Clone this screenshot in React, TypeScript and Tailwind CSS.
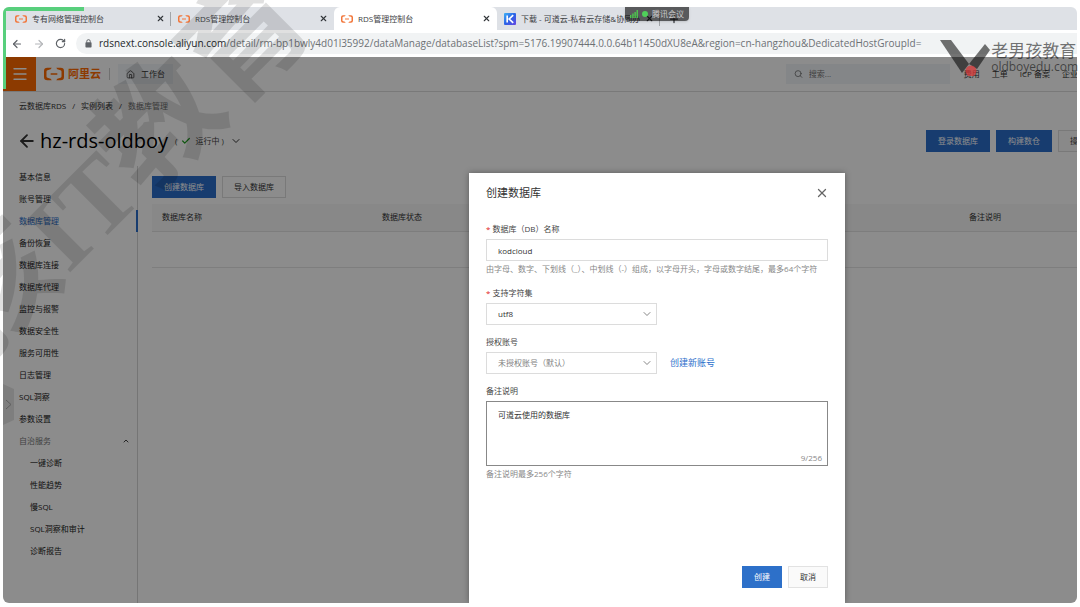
import { ArrowLeft, ArrowRight, Check, ChevronDown, ChevronUp, Home, Menu, Plus, RotateCw, Search, X } from "lucide-react";
import { SiAlibabacloud } from "react-icons/si";

const sideItems = [
  "基本信息",
  "账号管理",
  "数据库管理",
  "备份恢复",
  "数据库连接",
  "数据库代理",
  "监控与报警",
  "数据安全性",
  "服务可用性",
  "日志管理",
  "SQL洞察",
  "参数设置",
];
const subItems = ["一键诊断", "性能趋势", "慢SQL", "SQL洞察和审计", "诊断报告"];

function KodIcon() {
  return (
    <svg viewBox="0 0 12 12" className="size-3 shrink-0" aria-hidden="true">
      <defs>
        <linearGradient id="kod" x1="0" y1="0" x2="1" y2="1">
          <stop offset="0" stopColor="#3fb2f5" />
          <stop offset="0.5" stopColor="#2b62e6" />
          <stop offset="1" stopColor="#6a48e0" />
        </linearGradient>
      </defs>
      <rect width="12" height="12" rx="1" fill="url(#kod)" />
      <path d="M3.2 2.5v7M9.2 2.2 5.2 6l4 3.8" fill="none" stroke="#fff" strokeWidth="1.7" />
    </svg>
  );
}

function Tab({ title, kind = "ali", active = false, divider = false }: { title: string; kind?: string; active?: boolean; divider?: boolean }) {
  return (
    <div
      className={`flex w-[163px] shrink-0 items-center gap-[5px] pl-[7px] pr-[6px] ${active ? "rounded-t-md bg-white" : ""} ${
        divider ? "relative after:absolute after:right-0 after:top-[5px] after:h-[14px] after:w-px after:bg-[#a2a5a9]" : ""
      }`}
    >
      {kind === "ali" ? <SiAlibabacloud className="size-3 shrink-0 text-[#f2763a]" /> : <KodIcon />}
      <span className="min-w-0 flex-1 overflow-hidden whitespace-nowrap text-[8px] text-[#3c4043]">{title}</span>
      <button aria-label="关闭标签页" className="text-[#33363a]">
        <X className="size-[9px]" strokeWidth={3} />
      </button>
    </div>
  );
}

function Browser() {
  return (
    <div className="bg-white">
      <div className="flex h-[23px] overflow-hidden bg-[#dee1e6] pl-[5px]">
        <Tab title="专有网络管理控制台" divider />
        <Tab title="RDS管理控制台" />
        <Tab title="RDS管理控制台" active />
        <Tab title="下载 - 可道云-私有云存储&协同办公" kind="kod" divider />
        <button aria-label="新标签页" className="ml-2 text-[#33363a]">
          <Plus className="size-3" strokeWidth={2.5} />
        </button>
      </div>
      <div className="flex h-[27px] items-center gap-[10px] pl-2 text-[#5f6368]">
        <button aria-label="后退"><ArrowLeft className="size-3" strokeWidth={2.4} /></button>
        <button aria-label="前进" className="text-[#b4b6b9]"><ArrowRight className="size-3" strokeWidth={2.4} /></button>
        <button aria-label="刷新"><RotateCw className="size-[11px]" strokeWidth={2.6} /></button>
        <div className="flex h-[21px] min-w-0 flex-1 items-center gap-[7px] overflow-hidden rounded-l-full bg-[#f1f3f4] pl-[9px]">
          <svg viewBox="0 0 8 10" className="h-[9px] w-[7px] shrink-0" aria-hidden="true">
            <rect x="0.5" y="3.7" width="7" height="5.8" rx="0.8" fill="#5f6368" />
            <path d="M2 4V2.6a2 2 0 0 1 4 0V4" fill="none" stroke="#5f6368" strokeWidth="1.1" />
          </svg>
          <span className="whitespace-nowrap text-[10px] text-[#6d7175]">
            <span className="text-[#24272a]">rdsnext.console.aliyun.com</span>
            /detail/rm-bp1bwly4d01l35992/dataManage/databaseList?spm=5176.19907444.0.0.64b11450dXU8eA&amp;region=cn-hangzhou&amp;DedicatedHostGroupId=
          </span>
        </div>
      </div>
    </div>
  );
}

function TopBar() {
  return (
    <header className="flex h-[35px] items-center overflow-hidden whitespace-nowrap border-b border-[#dcdcdc] text-[8px] text-[#333]">
      <button aria-label="菜单" className="flex h-full w-[33px] shrink-0 items-center justify-center bg-[#ff6a00] text-white">
        <Menu className="size-[18px]" strokeWidth={1.8} />
      </button>
      <a href="#home" className="ml-2 flex items-center gap-1 text-[11px] font-bold text-[#ff6a00]">
        <SiAlibabacloud className="size-5" />
        阿里云
      </a>
      <span className="ml-2 h-3 w-px bg-[#ccc]" />
      <a href="#workbench" className="ml-2 flex h-5 items-center gap-[6px] bg-[#f3f6fa] px-2">
        <Home className="size-[9px]" />
        工作台
      </a>
      <label className="ml-auto flex h-5 w-[164px] shrink-0 items-center gap-[6px] bg-[#f1f4f8] px-2 text-[#666]">
        <Search className="size-[10px]" />
        <input aria-label="搜索" placeholder="搜索..." className="w-full bg-transparent outline-none placeholder:text-[#777]" />
      </label>
      <nav className="-mr-px ml-[14px] flex gap-3">
        <a href="#fee">费用</a>
        <a href="#ticket">工单</a>
        <a href="#icp">ICP 备案</a>
        <a href="#ent">企业</a>
      </nav>
    </header>
  );
}

function Sidebar() {
  return (
    <nav className="relative w-[135px] shrink-0 border-r border-[#d5d5d5] text-[8px] leading-[22px] text-[#222]">
      <ul>
        {sideItems.map((t) => (
          <li key={t}>
            <a href={`#${t}`} className={`block pl-4 ${t === "数据库管理" ? "-mr-px border-r-2 border-[#2a6ecb] text-[#2a6ecb]" : ""}`}>
              {t}
            </a>
          </li>
        ))}
        <li>
          <button className="flex w-full items-center justify-between pl-4 pr-[7px] text-[#777]">
            自治服务
            <ChevronUp className="size-2 text-[#444]" strokeWidth={3} />
          </button>
          <ul>
            {subItems.map((t) => (
              <li key={t}>
                <a href={`#${t}`} className="block pl-[27px]">{t}</a>
              </li>
            ))}
          </ul>
        </li>
      </ul>
      <svg viewBox="0 0 11 41" className="absolute left-0 top-[218px] h-[41px] w-[11px]" aria-hidden="true">
        <path d="M0 0 11 5v31L0 41Z" fill="#e6e6e6" />
        <path d="m3 16 5 4.500-5 4.500" fill="none" stroke="#aaa" />
      </svg>
    </nav>
  );
}

function Page() {
  return (
    <div className="flex flex-1 flex-col bg-white">
      <TopBar />
      <div className="flex h-7 items-center gap-[6px] pl-4 text-[8px] text-[#333]">
        <a href="#rds">云数据库RDS</a>
        <span>/</span>
        <a href="#list">实例列表</a>
        <span>/</span>
        <span className="text-[#777]">数据库管理</span>
      </div>
      <div className="flex h-[46px] shrink-0 items-center overflow-hidden whitespace-nowrap pb-1 pl-[14px] text-[8px] text-[#444]">
        <button aria-label="返回" className="text-[#333]">
          <ArrowLeft className="size-5" strokeWidth={2.2} />
        </button>
        <h1 className="ml-[3px] text-[20px] font-medium text-black">hz-rds-oldboy</h1>
        <span className="ml-[7px] flex items-center gap-1">
          ( <Check className="size-[10px] text-[#22a022]" strokeWidth={3} /> 运行中 )
        </span>
        <ChevronDown className="ml-[6px] size-3 text-[#333]" />
        <div className="-mr-[37px] ml-auto flex shrink-0 gap-[6px]">
          <button className="h-[22px] w-16 bg-[#2a6ecb] text-white">登录数据库</button>
          <button className="h-[22px] w-14 bg-[#2a6ecb] text-white">构建数仓</button>
          <button className="h-[22px] w-14 border border-[#ddd] bg-[#fafafa]">操作指引</button>
        </div>
      </div>
      <div className="flex flex-1">
        <Sidebar />
        <main className="min-w-0 flex-1 pl-[14px] pt-[10px] text-[8px]">
          <div className="flex gap-[6px]">
            <button className="h-[22px] w-16 bg-[#2a6ecb] text-white">创建数据库</button>
            <button className="h-[22px] w-16 border border-[#ddd] text-[#333]">导入数据库</button>
          </div>
          <table className="mt-[6px] w-full table-fixed text-left text-[#333]">
            <thead>
              <tr className="h-[27px] border-b border-[#e3e3e3] bg-[#f7f7f7]">
                <th className="w-[220px] pl-[10px] font-normal">数据库名称</th>
                <th className="pl-[10px] font-normal">数据库状态</th>
                <th className="w-[118px] pl-[10px] font-normal">备注说明</th>
              </tr>
            </thead>
            <tbody>
              <tr className="h-9 border-b border-[#e6e6e6]">
                <td colSpan={3} />
              </tr>
            </tbody>
          </table>
        </main>
      </div>
    </div>
  );
}

function Picker({ id, value, muted = false }: { id: string; value: string; muted?: boolean }) {
  return (
    <div className="relative w-[171px]">
      <select
        id={id}
        className={`h-[22px] w-full appearance-none border border-[#dcdcdc] bg-white pl-[11px] ${muted ? "text-[#808080]" : "text-[#333]"}`}
      >
        <option>{value}</option>
      </select>
      <ChevronDown className="pointer-events-none absolute right-1 top-[5px] size-3 text-[#777]" strokeWidth={1.8} />
    </div>
  );
}

function Dialog() {
  return (
    <section role="dialog" aria-labelledby="dlg" className="flex w-[376px] flex-col bg-white px-[17px] pb-[15px] text-[8px] text-[#444] shadow-[0_0_6px_rgba(0,0,0,0.35)]">
      <div className="flex h-10 items-center justify-between">
        <h2 id="dlg" className="text-[11px] text-[#333]">创建数据库</h2>
        <button aria-label="关闭" className="-mr-px text-[#666]">
          <X className="size-[14px]" strokeWidth={2.2} />
        </button>
      </div>
      <form className="flex flex-1 flex-col leading-4">
        <div className="mt-2">
          <label htmlFor="db" className="block h-[18px]"><span className="mr-[2px] text-[#e02020]">*</span>数据库（DB）名称</label>
          <input id="db" defaultValue="kodcloud" className="h-[22px] w-full border border-[#dcdcdc] px-[11px] text-[#333]" />
          <p className="whitespace-nowrap text-[#888]">由字母、数字、下划线（_）、中划线（-）组成，以字母开头，字母或数字结尾，最多64个字符</p>
        </div>
        <div className="mt-2">
          <label htmlFor="charset" className="block h-[18px]"><span className="mr-[2px] text-[#e02020]">*</span>支持字符集</label>
          <Picker id="charset" value="utf8" />
        </div>
        <div className="mt-[9px]">
          <label htmlFor="account" className="block h-[18px]">授权账号</label>
          <div className="flex items-center gap-[13px]">
            <Picker id="account" value="未授权账号（默认）" muted />
            <a href="#new" className="text-[9px] text-[#2a6ecb]">创建新账号</a>
          </div>
        </div>
        <div className="mt-[9px]">
          <label htmlFor="note" className="block h-[18px]">备注说明</label>
          <div className="relative">
            <textarea id="note" defaultValue="可道云使用的数据库" className="block h-[65px] w-full resize-none border border-[#888] px-[11px] py-[5px] text-[#333]" />
            <span className="absolute bottom-0 right-[6px] text-[#888]">9/256</span>
          </div>
          <p className="text-[#888]">备注说明最多256个字符</p>
        </div>
        <div className="mt-auto flex justify-end gap-[6px]">
          <button type="button" className="h-[22px] w-10 bg-[#2d70c9] text-white">创建</button>
          <button type="button" className="h-[22px] w-10 border border-[#e2e2e2] bg-[#fafafa] text-[#333]">取消</button>
        </div>
      </form>
    </section>
  );
}

function BrandMark() {
  return (
    <div className="pointer-events-none absolute right-[2px] top-[38px] flex whitespace-nowrap text-black/55">
      <svg viewBox="0 0 54 38" className="h-[38px] w-[54px]" aria-hidden="true">
        <path d="M2 2h11l18 24-7 9Z" fill="#000" fillOpacity="0.55" />
        <path d="m47 6 5 6-13 19-8-5Z" fill="#000" fillOpacity="0.55" />
        <circle cx="33" cy="33" r="5.500" fill="#d83a3a" fillOpacity="0.75" />
      </svg>
      <div className="-ml-px">
        <div className="h-5 text-[17px] leading-[26px]">老男孩教育</div>
        <div className="text-[12px] leading-[18px]">oldboyedu.com</div>
      </div>
    </div>
  );
}

export default function App() {
  return (
    <div className="relative flex min-h-screen flex-col overflow-hidden bg-white px-[3px] pb-1 pt-[7px] font-['Open_Sans','Noto_Sans_CJK_SC',sans-serif]">
      <div className="flex flex-1 flex-col overflow-hidden rounded-md">
        <Browser />
        <div className="relative flex flex-1 flex-col">
          <Page />
          <div className="absolute inset-0 flex bg-black/45 pl-[466px] pt-[116px]">
            <Dialog />
          </div>
        </div>
      </div>
      <div className="absolute left-[3px] top-[7px] h-[82px] w-[81px] rounded-tl-md border-l-[3px] border-t-4 border-[#58cf7c] [clip-path:polygon(0_0,100%_0,100%_4px,3px_4px,3px_100%,0_100%)]" />
      <div className="absolute left-[625px] top-[7px] flex h-[14px] items-center gap-1 rounded-b-sm bg-black/60 px-[5px] text-[8px] text-[#ccc] shadow">
        <svg viewBox="0 0 8 8" className="size-2" fill="#4fc24f" aria-hidden="true">
          <path d="M0 5h1.500v3H0zM2.200 3.500h1.500V8H2.200zM4.400 2h1.500v6H4.400zM6.500 0H8v8H6.500z" />
        </svg>
        <span className="size-[6px] rounded-full bg-[#4fd05a]" />
        腾讯会议
      </div>
      <BrandMark />
      <svg viewBox="0 0 340 360" className="pointer-events-none absolute left-0 top-0 h-[360px] w-[340px]" aria-hidden="true">
        <text
          x="118"
          y="206"
          textAnchor="middle"
          transform="rotate(-45 118 161)"
          fill="#000"
          fillOpacity="0.12"
          className="font-['Liberation_Serif','Noto_Sans_CJK_SC',serif] text-[122px] font-bold"
        >
          孩<tspan className="text-[104px]">IT</tspan>教育
        </text>
      </svg>
    </div>
  );
}
